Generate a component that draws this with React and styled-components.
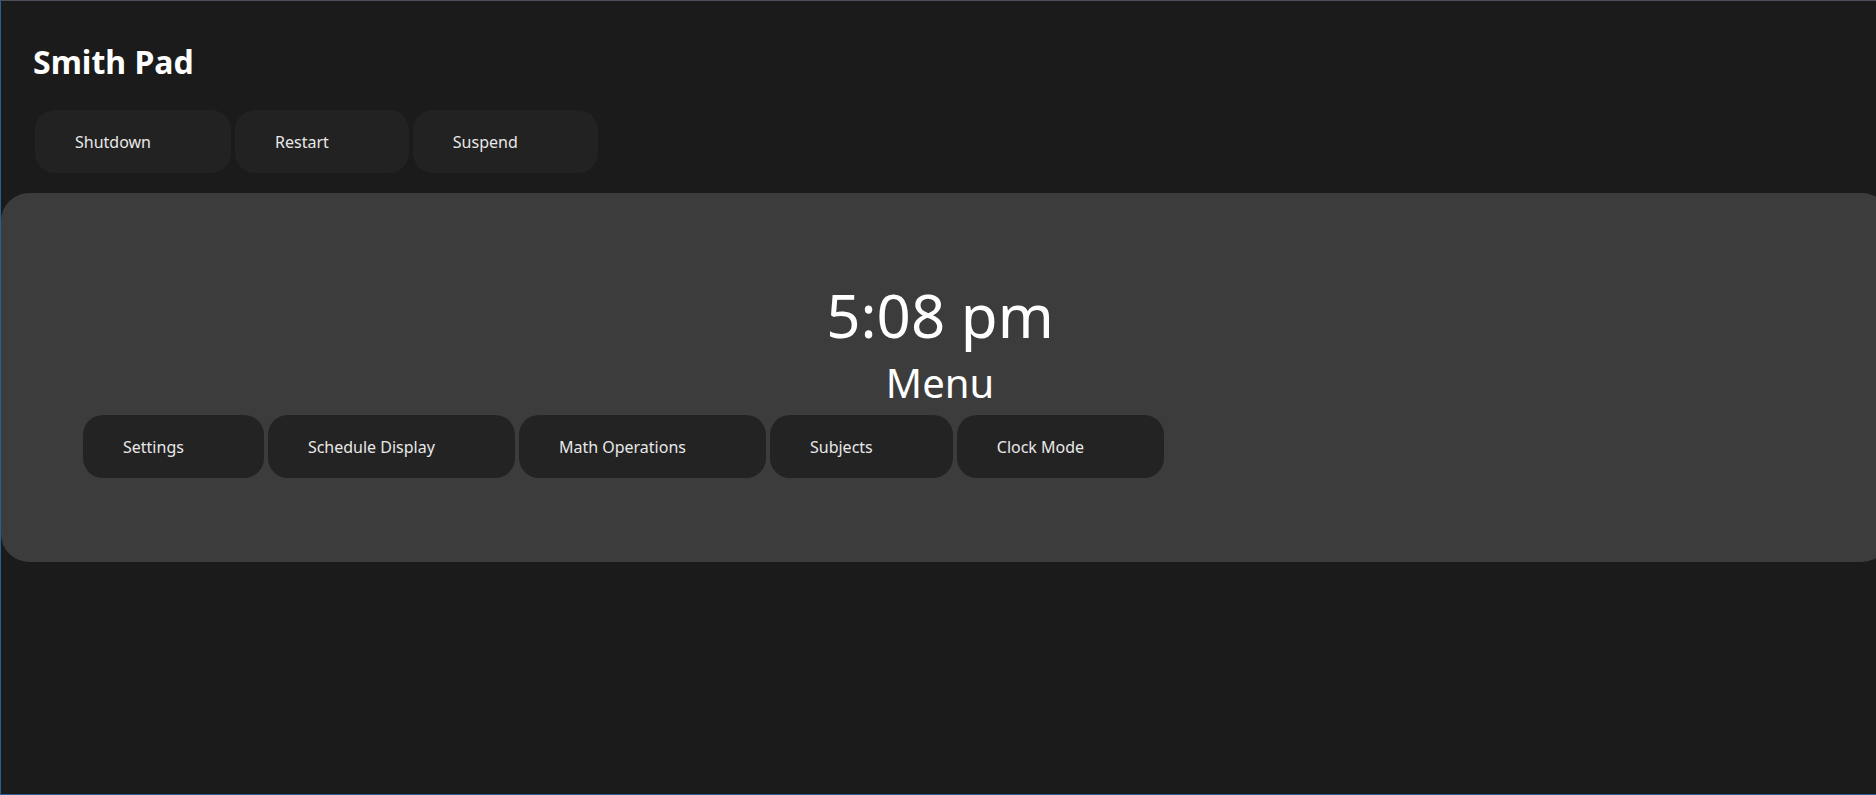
import React from "react";
import styled, { createGlobalStyle } from "styled-components";

const Global = createGlobalStyle`
  html, body { margin: 0; padding: 0; background: #1b1b1b; }
  * { box-sizing: border-box; }
`;

const Frame = styled.div`
  width: 1876px;
  height: 795px;
  overflow: hidden;
  background: #1b1b1b;
  border-top: 1px solid #4b5058;
  border-left: 1px solid #2b5f90;
  border-bottom: 1px solid #2b5f90;
  font-family: "Noto Sans", "Open Sans", sans-serif;
  color: #ffffff;
  display: flex;
  flex-direction: column;
`;

const Header = styled.header`
  padding: 39px 0 0 32px;
  display: flex;
  flex-direction: column;
  gap: 26px;
`;

const Title = styled.h1`
  margin: 0;
  font-size: 32px;
  line-height: 44px;
  font-weight: 700;
  color: #ffffff;
`;

const ButtonRow = styled.div`
  display: flex;
  gap: 4px;
  padding-left: ${(p) => p.$inset || 0}px;
`;

const PillButton = styled.button`
  height: 63px;
  padding: 0 80px 0 40px;
  border: none;
  border-radius: 20px;
  background: ${(p) => (p.$onPanel ? "#232323" : "#222222")};
  color: #e8e8e8;
  font-family: inherit;
  font-size: 16px;
  line-height: 22px;
  display: flex;
  align-items: center;
  cursor: pointer;
  white-space: nowrap;
`;

const Panel = styled.section`
  margin: 20px -14px 0 0;
  height: 369px;
  border-radius: 28px;
  background: #3c3c3c;
  padding: 81px 0 0 0;
  display: flex;
  flex-direction: column;
`;

const Clock = styled.div`
  font-size: 60px;
  line-height: 82px;
  text-align: center;
  padding-right: 11px;
  color: #ffffff;
`;

const MenuTitle = styled.h2`
  margin: 0;
  font-size: 40px;
  line-height: 54px;
  font-weight: 400;
  text-align: center;
  padding-right: 11px;
  color: #ffffff;
`;

const MenuRow = styled(ButtonRow)`
  margin-top: 5px;
`;

const power = ["Shutdown", "Restart", "Suspend"];
const menu = ["Settings", "Schedule Display", "Math Operations", "Subjects", "Clock Mode"];

export default function App() {
  return (
    <>
      <Global />
      <Frame>
        <Header>
          <Title>Smith Pad</Title>
          <ButtonRow $inset={2}>
            {power.map((l) => (
              <PillButton key={l}>{l}</PillButton>
            ))}
          </ButtonRow>
        </Header>
        <Panel>
          <Clock>5:08 pm</Clock>
          <MenuTitle>Menu</MenuTitle>
          <MenuRow $inset={82}>
            {menu.map((l) => (
              <PillButton key={l} $onPanel>
                {l}
              </PillButton>
            ))}
          </MenuRow>
        </Panel>
      </Frame>
    </>
  );
}
